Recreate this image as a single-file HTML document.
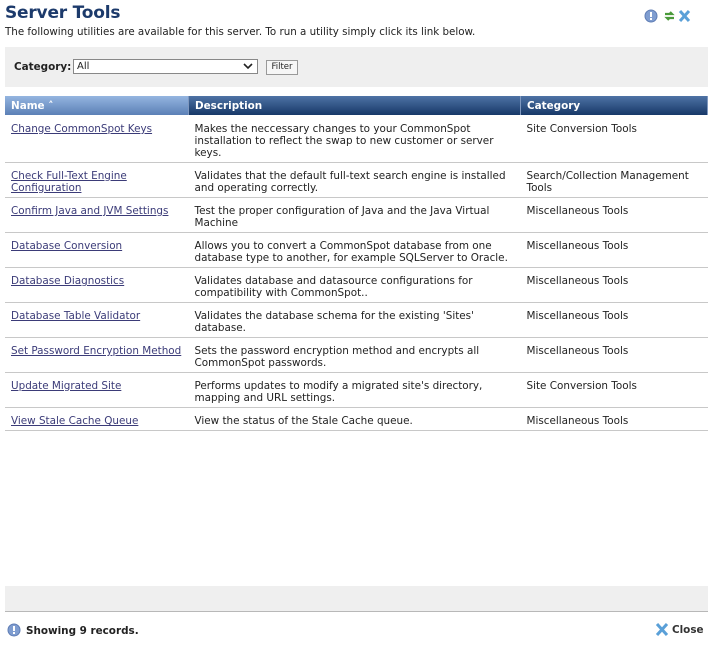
<!DOCTYPE html>
<html><head><style>
body{margin:0;width:712px;height:646px;background:#fff;font-family:"DejaVu Sans",Verdana,sans-serif;font-size:10.4px;color:#222;position:relative;overflow:hidden}
.abs{position:absolute}
h1{position:absolute;left:5px;top:3px;margin:0;font-size:17px;font-weight:bold;color:#1c3a6b;letter-spacing:-0.2px}
.sub{left:5px;top:26px;font-size:10.3px}
.panel{left:5px;top:47px;width:703px;height:40px;background:#efefef}
table{position:absolute;left:5px;top:96px;width:703px;border-collapse:collapse}
th{height:19px;padding:0 6px;text-align:left;color:#fff;font-size:10.4px;background:linear-gradient(#4e73a5,#173868);border-right:1px solid #7f98bf;border-bottom:1px solid #fff}
th.n{background:linear-gradient(#94b5e0,#5b80b6)}
td{vertical-align:top;padding:7px 6px 3px;line-height:12px;border-bottom:1px solid #c8c8c8}
a{color:#3b3b78;text-decoration:underline}
</style></head><body>
<h1>Server Tools</h1>
<div class="abs sub">The following utilities are available for this server. To run a utility simply click its link below.</div>
<svg class="abs" style="left:644px;top:9px" width="60" height="14">
<circle cx="7" cy="7" r="6" fill="#7f9dd0" stroke="#5f7db5"/><rect x="6" y="3" width="2" height="5" fill="#fff"/><rect x="6" y="9" width="2" height="2" fill="#fff"/>
<path d="M21 5h7l-2-2M30 9h-7l2 2" stroke="#4a9a3a" stroke-width="2.2" fill="none"/>
<path d="M36 2l9 10M45 2l-9 10" stroke="#5aa0d8" stroke-width="3"/>
</svg>
<div class="abs panel"></div>
<div class="abs" style="left:14px;top:61px;font-weight:bold;font-size:10.4px">Category:</div>
<div class="abs" style="left:73px;top:59px;height:15px;border:1px solid #888;background:#fff;font-size:10px;line-height:14px;padding-left:3px;box-sizing:border-box;width:185px">All</div>
<svg class="abs" style="left:243px;top:63px" width="10" height="7"><path d="M1 1l4 4 4-4" stroke="#222" stroke-width="1.6" fill="none"/></svg>
<div class="abs" style="left:266px;top:60px;width:30px;height:13px;border:1px solid #999;background:#f6f6f6;font-size:8.5px;line-height:13px;text-align:center">Filter</div>
<table>
<tr><th class="n" style="width:171px">Name &#x2c4;</th><th style="width:319px">Description</th><th>Category</th></tr>
<tr><td><a>Change CommonSpot Keys</a></td><td>Makes the neccessary changes to your CommonSpot installation to reflect the swap to new customer or server keys.</td><td>Site Conversion Tools</td></tr>
<tr><td><a>Check Full-Text Engine Configuration</a></td><td>Validates that the default full-text search engine is installed and operating correctly.</td><td>Search/Collection Management Tools</td></tr>
<tr><td><a>Confirm Java and JVM Settings</a></td><td>Test the proper configuration of Java and the Java Virtual Machine</td><td>Miscellaneous Tools</td></tr>
<tr><td><a>Database Conversion</a></td><td>Allows you to convert a CommonSpot database from one database type to another, for example SQLServer to Oracle.</td><td>Miscellaneous Tools</td></tr>
<tr><td><a>Database Diagnostics</a></td><td>Validates database and datasource configurations for compatibility with CommonSpot..</td><td>Miscellaneous Tools</td></tr>
<tr><td><a>Database Table Validator</a></td><td>Validates the database schema for the existing 'Sites' database.</td><td>Miscellaneous Tools</td></tr>
<tr><td><a>Set Password Encryption Method</a></td><td>Sets the password encryption method and encrypts all CommonSpot passwords.</td><td>Miscellaneous Tools</td></tr>
<tr><td><a>Update Migrated Site</a></td><td>Performs updates to modify a migrated site's directory, mapping and URL settings.</td><td>Site Conversion Tools</td></tr>
<tr><td><a>View Stale Cache Queue</a></td><td>View the status of the Stale Cache queue.</td><td>Miscellaneous Tools</td></tr>
</table>
<div class="abs" style="left:5px;top:586px;width:703px;height:25px;background:#efefef;border-bottom:1px solid #b8b8b8"></div>
<svg class="abs" style="left:7px;top:623px" width="14" height="14"><circle cx="7" cy="7" r="6" fill="#7f9dd0" stroke="#5f7db5"/><rect x="6" y="3" width="2" height="5" fill="#fff"/><rect x="6" y="9" width="2" height="2" fill="#fff"/></svg>
<div class="abs" style="left:26px;top:625px;font-weight:bold;font-size:10.4px">Showing 9 records.</div>
<svg class="abs" style="left:656px;top:623px" width="12" height="13"><path d="M1 1l10 11M11 1L1 12" stroke="#5aa0d8" stroke-width="3"/></svg>
<div class="abs" style="left:672px;top:624px;font-weight:bold;font-size:10.4px;color:#333">Close</div>
</body></html>
